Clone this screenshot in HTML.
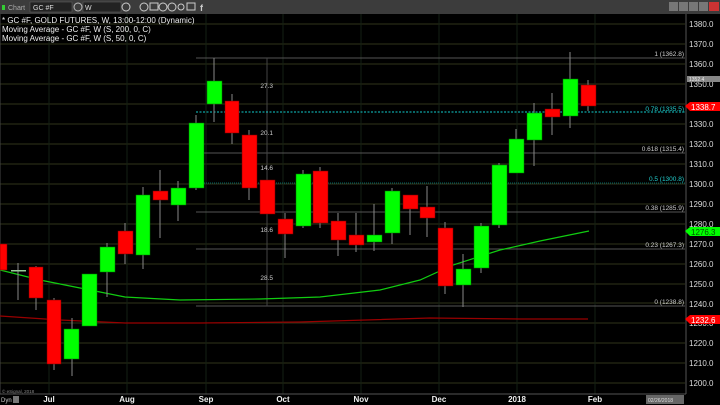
<!DOCTYPE html>
<html><head><meta charset="utf-8"><style>
html,body{margin:0;padding:0;background:#000;width:720px;height:405px;overflow:hidden}
svg{display:block;font-family:"Liberation Sans",sans-serif}
</style></head><body>
<svg width="720" height="405" viewBox="0 0 720 405">
<rect width="720" height="405" fill="#000"/>
<!-- top bar -->
<rect x="0" y="0" width="720" height="14" fill="#3c3c3c"/>
<rect x="2" y="5" width="3" height="5" fill="#3c3"/>
<text x="8" y="10" font-size="7" fill="#aaa">Chart</text>
<rect x="30" y="2" width="42" height="10" fill="#222" stroke="#666" stroke-width="0.5"/>
<text x="33" y="10" font-size="7" fill="#ddd">GC #F</text>
<circle cx="78" cy="7" r="4" fill="none" stroke="#bbb"/>
<rect x="83" y="2" width="38" height="10" fill="#222" stroke="#666" stroke-width="0.5"/>
<text x="85" y="10" font-size="7" fill="#ddd">W</text>
<g fill="none" stroke="#ccc" stroke-width="1">
<circle cx="126" cy="7" r="4"/><circle cx="144" cy="7" r="4"/><rect x="150" y="3" width="8" height="7"/><circle cx="163" cy="7" r="4"/><circle cx="172" cy="7" r="4"/><circle cx="181" cy="7" r="3"/><rect x="187" y="3" width="8" height="7"/></g>
<text x="200" y="11" font-size="9" fill="#ccc" font-weight="bold">f</text>
<rect x="669" y="2" width="9" height="9" fill="#777"/><rect x="679" y="2" width="9" height="9" fill="#777"/><rect x="689" y="2" width="9" height="9" fill="#777"/><rect x="699" y="2" width="9" height="9" fill="#777"/><rect x="709" y="2" width="10" height="9" fill="#c33"/>
<!-- grid -->
<g stroke="#2f331a" stroke-width="1">
<line x1="0" y1="24" x2="685" y2="24"/><line x1="0" y1="44" x2="685" y2="44"/><line x1="0" y1="64" x2="685" y2="64"/><line x1="0" y1="84" x2="685" y2="84"/><line x1="0" y1="104" x2="685" y2="104"/><line x1="0" y1="124" x2="685" y2="124"/><line x1="0" y1="144" x2="685" y2="144"/><line x1="0" y1="164" x2="685" y2="164"/><line x1="0" y1="184" x2="685" y2="184"/><line x1="0" y1="204" x2="685" y2="204"/><line x1="0" y1="224" x2="685" y2="224"/><line x1="0" y1="244" x2="685" y2="244"/><line x1="0" y1="264" x2="685" y2="264"/><line x1="0" y1="284" x2="685" y2="284"/><line x1="0" y1="303" x2="685" y2="303"/><line x1="0" y1="323" x2="685" y2="323"/><line x1="0" y1="343" x2="685" y2="343"/><line x1="0" y1="363" x2="685" y2="363"/><line x1="0" y1="383" x2="685" y2="383"/>
</g>
<g stroke="#142014" stroke-width="1">
<line x1="49" y1="14" x2="49" y2="394"/><line x1="127" y1="14" x2="127" y2="394"/><line x1="206" y1="14" x2="206" y2="394"/><line x1="283" y1="14" x2="283" y2="394"/><line x1="361" y1="14" x2="361" y2="394"/><line x1="439" y1="14" x2="439" y2="394"/><line x1="517" y1="14" x2="517" y2="394"/><line x1="595" y1="14" x2="595" y2="394"/>
</g>
<line x1="0" y1="14" x2="0" y2="394" stroke="#444"/>
<line x1="0" y1="394" x2="686" y2="394" stroke="#555"/>
<line x1="686" y1="14" x2="686" y2="394" stroke="#555"/>
<!-- fib lines -->
<g stroke="#555" stroke-width="1">
<line x1="196" y1="58" x2="685" y2="58"/><line x1="196" y1="153" x2="685" y2="153"/><line x1="196" y1="212" x2="685" y2="212"/><line x1="196" y1="249" x2="685" y2="249"/><line x1="196" y1="306" x2="685" y2="306"/>
<line x1="267" y1="58" x2="267" y2="306" stroke="#444"/>
</g>
<line x1="196" y1="112" x2="685" y2="112" stroke="#1cc" stroke-dasharray="2,1.5"/>
<line x1="196" y1="183" x2="685" y2="183" stroke="#066" stroke-dasharray="1,1"/>
<g font-size="6.5" fill="#ccc" text-anchor="end">
<text x="684" y="56">1 (1362.8)</text><text x="684" y="111" fill="#2cc">0.78 (1335.5)</text><text x="684" y="151">0.618 (1315.4)</text><text x="684" y="181" fill="#2cc">0.5 (1300.8)</text><text x="684" y="210">0.38 (1285.9)</text><text x="684" y="247">0.23 (1267.3)</text><text x="684" y="304">0 (1238.8)</text>
<text x="273" y="88">27.3</text><text x="273" y="135">20.1</text><text x="273" y="170">14.6</text><text x="273" y="232">18.6</text><text x="273" y="280">28.5</text>
</g>
<!-- MAs -->
<polyline fill="none" stroke="#900" stroke-width="1.2" points="0,316 60,320 125,323 200,323 300,322 430,318 520,319 588,319"/>
<polyline fill="none" stroke="#1c1" stroke-width="1.2" points="0,270 40,280 80,288 125,297 180,300 260,299 320,297 380,290 420,280 453,265 500,250 540,241 589,231"/>
<!-- wicks -->
<g stroke="#888" stroke-width="1">
<line x1="18" y1="263" x2="18" y2="300"/><line x1="36" y1="266" x2="36" y2="310"/><line x1="54" y1="298" x2="54" y2="370"/><line x1="72" y1="318" x2="72" y2="376"/><line x1="107" y1="243" x2="107" y2="297"/><line x1="125" y1="223" x2="125" y2="264"/><line x1="143" y1="187" x2="143" y2="269"/><line x1="160" y1="170" x2="160" y2="238"/><line x1="178" y1="181" x2="178" y2="221"/>
<line x1="196" y1="115" x2="196" y2="190"/><line x1="214" y1="58" x2="214" y2="122"/><line x1="232" y1="94" x2="232" y2="144"/><line x1="249" y1="130" x2="249" y2="200"/><line x1="285" y1="213" x2="285" y2="258"/><line x1="303" y1="170" x2="303" y2="228"/><line x1="320" y1="167" x2="320" y2="228"/><line x1="338" y1="213" x2="338" y2="256"/><line x1="356" y1="213" x2="356" y2="252"/><line x1="374" y1="204" x2="374" y2="251"/><line x1="392" y1="188" x2="392" y2="244"/><line x1="410" y1="195" x2="410" y2="235"/><line x1="427" y1="186" x2="427" y2="237"/><line x1="445" y1="222" x2="445" y2="294"/><line x1="463" y1="254" x2="463" y2="307"/><line x1="481" y1="223" x2="481" y2="273"/><line x1="499" y1="163" x2="499" y2="228"/><line x1="516" y1="129" x2="516" y2="173"/><line x1="534" y1="103" x2="534" y2="166"/><line x1="552" y1="93" x2="552" y2="135"/><line x1="570" y1="52" x2="570" y2="128"/><line x1="588" y1="80" x2="588" y2="111"/>
</g>
<rect x="11" y="270" width="15" height="1.5" fill="#9c9"/>
<!-- red bodies -->
<g fill="#f00" stroke="#700" stroke-width="0.5">
<rect x="0" y="244" width="7" height="26"/><rect x="29" y="267" width="14" height="31"/><rect x="47" y="300" width="14" height="64"/><rect x="118" y="231" width="15" height="23"/><rect x="153" y="191" width="15" height="9"/>
<rect x="225" y="101" width="14" height="32"/><rect x="242" y="135" width="15" height="53"/><rect x="260" y="180" width="15" height="34"/><rect x="278" y="219" width="15" height="15"/><rect x="313" y="171" width="15" height="52"/><rect x="331" y="221" width="15" height="19"/><rect x="349" y="235" width="15" height="10"/><rect x="403" y="195" width="15" height="14"/><rect x="420" y="207" width="15" height="11"/><rect x="438" y="228" width="15" height="58"/><rect x="545" y="109" width="15" height="8"/><rect x="581" y="85" width="15" height="21"/>
</g>
<!-- green bodies -->
<g fill="#0f0" stroke="#070" stroke-width="0.5">
<rect x="64" y="329" width="15" height="30"/><rect x="82" y="274" width="15" height="52"/><rect x="100" y="247" width="15" height="25"/><rect x="136" y="195" width="14" height="60"/><rect x="171" y="188" width="15" height="17"/>
<rect x="189" y="123" width="15" height="65"/><rect x="207" y="81" width="15" height="23"/><rect x="296" y="174" width="15" height="52"/><rect x="367" y="235" width="15" height="7"/><rect x="385" y="191" width="15" height="42"/><rect x="456" y="269" width="15" height="16"/><rect x="474" y="226" width="15" height="42"/><rect x="492" y="165" width="15" height="60"/><rect x="509" y="139" width="15" height="34"/><rect x="527" y="113" width="15" height="27"/><rect x="563" y="79" width="15" height="37"/>
</g>
<!-- legend -->
<g font-size="8" fill="#eee">
<text x="2" y="23">* GC #F, GOLD FUTURES, W, 13:00-12:00 (Dynamic)</text>
<text x="2" y="32">Moving Average - GC #F, W (S, 200, 0, C)</text>
<text x="2" y="41">Moving Average - GC #F, W (S, 50, 0, C)</text>
</g>
<!-- price axis -->
<g font-size="8" fill="#ddd">
<text x="689" y="27">1380.0</text><text x="689" y="47">1370.0</text><text x="689" y="67">1360.0</text><text x="689" y="87">1350.0</text><text x="689" y="127">1330.0</text><text x="689" y="147">1320.0</text><text x="689" y="167">1310.0</text><text x="689" y="187">1300.0</text><text x="689" y="207">1290.0</text><text x="689" y="227">1280.0</text><text x="689" y="247">1270.0</text><text x="689" y="267">1260.0</text><text x="689" y="287">1250.0</text><text x="689" y="307">1240.0</text><text x="689" y="326">1230.0</text><text x="689" y="346">1220.0</text><text x="689" y="366">1210.0</text><text x="689" y="386">1200.0</text>
</g>
<rect x="687" y="76" width="33" height="6" fill="#888"/><text x="689" y="81" font-size="5" fill="#eee">1352.4</text>
<polygon points="685,106 690,102 720,102 720,111 690,111" fill="#f00"/><text x="691" y="110" font-size="8" fill="#fff">1338.7</text>
<polygon points="685,231 690,227 720,227 720,236 690,236" fill="#0f0"/><text x="691" y="235" font-size="8" fill="#050">1276.3</text>
<polygon points="685,319 690,315 720,315 720,324 690,324" fill="#f00"/><text x="691" y="323" font-size="8" fill="#fff">1232.6</text>
<!-- time axis -->
<g font-size="8" fill="#eee" font-weight="bold" text-anchor="middle">
<text x="49" y="402">Jul</text><text x="127" y="402">Aug</text><text x="206" y="402">Sep</text><text x="283" y="402">Oct</text><text x="361" y="402">Nov</text><text x="439" y="402">Dec</text><text x="517" y="402">2018</text><text x="595" y="402">Feb</text>
</g>
<rect x="646" y="395" width="38" height="9" fill="#666"/><text x="648" y="402" font-size="5" fill="#ddd">02/26/2018</text>
<text x="2" y="393" font-size="4.5" fill="#888">© eSignal, 2018</text>
<text x="1" y="402" font-size="6" fill="#ccc">Dyn</text><rect x="13" y="396" width="6" height="7" fill="#777"/>
</svg>
</body></html>
